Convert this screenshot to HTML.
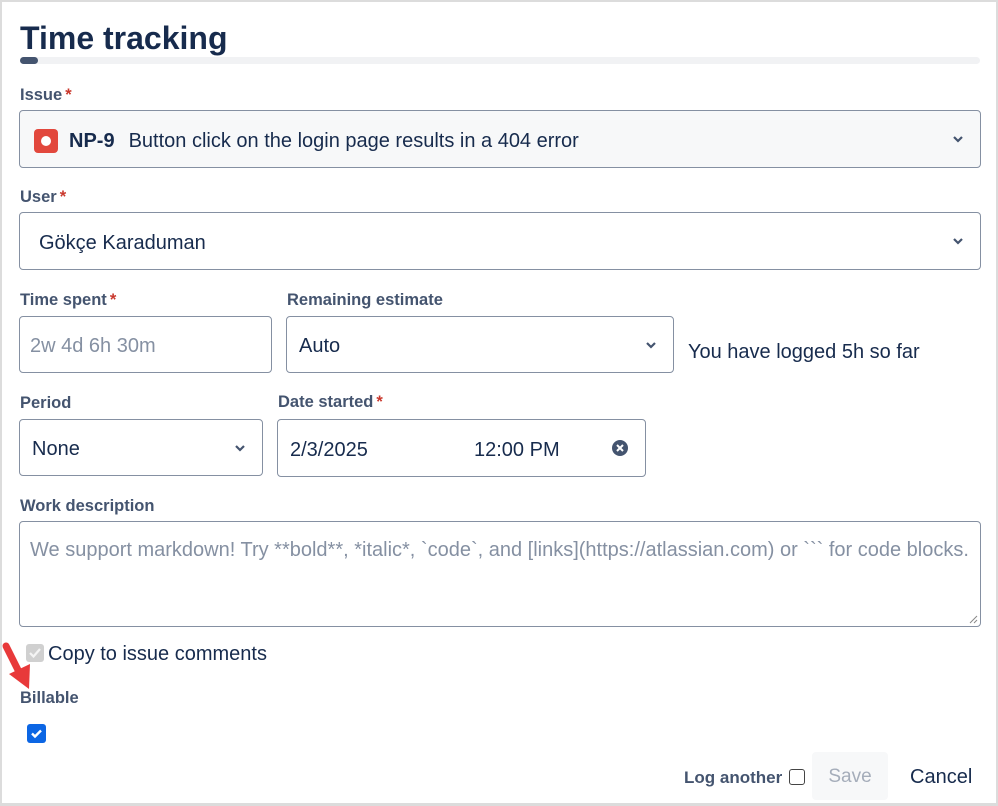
<!DOCTYPE html><html><head><style>
body{margin:0;width:998px;height:806px;overflow:hidden;background:#fff;font-family:"Liberation Sans",sans-serif;color:#172b4d;position:relative}
.frame{position:absolute;left:0;top:0;width:994px;height:801px;border:2px solid #dcdcdc;border-bottom-width:3px}
.a{position:absolute}
.lbl{position:absolute;font-size:16.5px;font-weight:bold;color:#44546f}
.lbl i{color:#c9372c;font-style:normal;margin-left:3px}
.box{position:absolute;border:1px solid #8590a2;border-radius:4px;box-sizing:border-box;font-size:20px;display:flex;align-items:center;padding-top:4px}
.chev{position:absolute;right:16px;top:50%;margin-top:-5px}
</style></head><body>
<div class="frame"></div>
<div class="a" style="left:20px;top:20px;font-size:32px;font-weight:bold;color:#172b4d">Time tracking</div>
<div class="a" style="left:20px;top:57px;width:960px;height:7px;background:#f1f2f4;border-radius:4px"></div>
<div class="a" style="left:20px;top:57px;width:18px;height:7px;background:#44546f;border-radius:4px"></div>

<div class="lbl" style="left:20px;top:86px">Issue<i>*</i></div>
<div class="box" style="left:19px;top:110px;width:962px;height:58px;background:#f7f8f9">
<div style="width:24px;height:24px;background:#e2483d;border-radius:4px;margin-left:14px;position:relative"><div style="position:absolute;left:7px;top:7px;width:10px;height:10px;background:#fff;border-radius:50%"></div></div>
<b style="margin-left:11px">NP-9</b><span style="margin-left:14px">Button click on the login page results in a 404 error</span>
<svg class="chev" width="12" height="10" viewBox="0 0 12 10"><path d="M2 3l4 4 4-4" stroke="#44546f" stroke-width="2.2" fill="none"/></svg></div>

<div class="lbl" style="left:20px;top:188px">User<i>*</i></div>
<div class="box" style="left:19px;top:212px;width:962px;height:58px"><span style="margin-left:19px">Gökçe Karaduman</span>
<svg class="chev" width="12" height="10" viewBox="0 0 12 10"><path d="M2 3l4 4 4-4" stroke="#44546f" stroke-width="2.2" fill="none"/></svg></div>

<div class="lbl" style="left:20px;top:291px">Time spent<i>*</i></div>
<div class="box" style="left:19px;top:316px;width:253px;height:57px;color:#8590a2"><span style="margin-left:10px">2w 4d 6h 30m</span></div>
<div class="lbl" style="left:287px;top:291px">Remaining estimate</div>
<div class="box" style="left:286px;top:316px;width:388px;height:57px"><span style="margin-left:12px">Auto</span>
<svg class="chev" width="12" height="10" viewBox="0 0 12 10"><path d="M2 3l4 4 4-4" stroke="#44546f" stroke-width="2.2" fill="none"/></svg></div>
<div class="a" style="left:688px;top:341px;font-size:20px">You have logged 5h so far</div>

<div class="lbl" style="left:20px;top:394px">Period</div>
<div class="box" style="left:19px;top:419px;width:244px;height:57px"><span style="margin-left:12px">None</span>
<svg class="chev" width="12" height="10" viewBox="0 0 12 10"><path d="M2 3l4 4 4-4" stroke="#44546f" stroke-width="2.2" fill="none"/></svg></div>
<div class="lbl" style="left:278px;top:393px">Date started<i>*</i></div>
<div class="box" style="left:277px;top:419px;width:369px;height:58px"><span style="margin-left:12px">2/3/2025</span><span style="position:absolute;left:196px">12:00 PM</span>
<svg class="a" style="right:16px;top:19px" width="18" height="18" viewBox="0 0 18 18"><circle cx="9" cy="9" r="8" fill="#44546f"/><path d="M6 6l6 6M12 6l-6 6" stroke="#fff" stroke-width="2"/></svg></div>

<div class="lbl" style="left:20px;top:497px">Work description</div>
<div class="box" style="left:19px;top:521px;width:962px;height:106px;align-items:flex-start;color:#8590a2;font-size:20px;padding-top:0"><span style="margin:17px 0 0 10px;white-space:nowrap">We support markdown! Try **bold**, *italic*, &#96;code&#96;, and [links](https://atlassian.com) or &#96;&#96;&#96; for code blocks.</span>
<svg class="a" style="right:2px;bottom:2px" width="10" height="10"><path d="M9 2L2 9M9 6L6 9" stroke="#888" stroke-width="1"/></svg></div>

<div class="a" style="left:26px;top:644px;width:18px;height:18px;background:#d0d0d0;border-radius:3px"><svg width="18" height="18"><path d="M4 9l3.5 3.5L14 5" stroke="#f4f4f4" stroke-width="2.2" fill="none"/></svg></div>
<div class="a" style="left:48px;top:643px;font-size:20px">Copy to issue comments</div>
<svg class="a" style="left:0;top:640px" width="36" height="54"><path d="M6 6L20 34" stroke="#e8393a" stroke-width="7" stroke-linecap="round"/><path d="M9 34L29 49 30 24z" fill="#e8393a"/></svg>

<div class="lbl" style="left:20px;top:689px">Billable</div>
<div class="a" style="left:27px;top:724px;width:19px;height:19px;background:#0c66e4;border-radius:3px"><svg width="19" height="19"><path d="M5 9.5l3 3L14 6.5" stroke="#fff" stroke-width="2.4" fill="none"/></svg></div>

<div class="lbl" style="left:684px;top:768px;font-size:17px">Log another</div>
<div class="a" style="left:789px;top:769px;width:14px;height:14px;border:1.5px solid #444;border-radius:3px"></div>
<div class="a" style="left:812px;top:752px;width:76px;height:48px;background:#f7f8f9;border-radius:4px;color:#a5adba;font-size:19px;text-align:center;line-height:50px">Save</div>
<div class="a" style="left:910px;top:766px;font-size:20px;color:#172b4d">Cancel</div>
</body></html>
